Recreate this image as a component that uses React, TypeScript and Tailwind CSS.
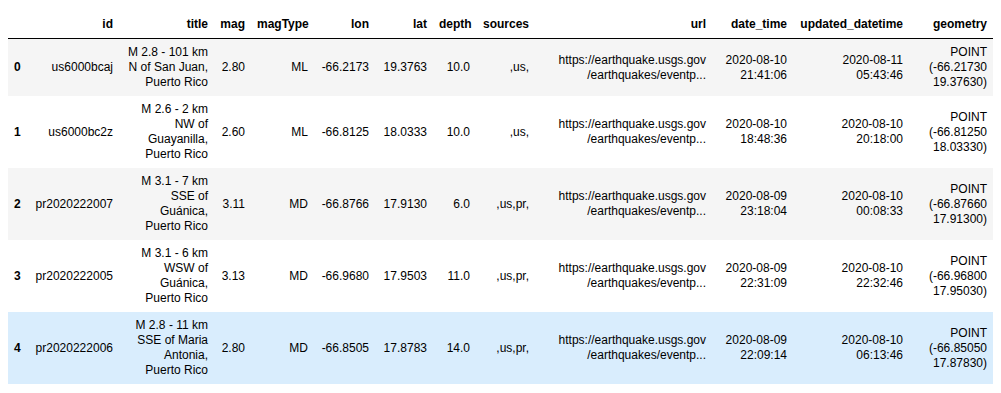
import React from 'react'

interface Quake {
  id: string;
  title: string[];
  mag: string;
  magType: string;
  lon: string;
  lat: string;
  depth: string;
  sources: string;
  date: string[];
  updated: string[];
  geometry: string[];
}

const quakes: Quake[] = [
  {
    id: 'us6000bcaj',
    title: ['M 2.8 - 101 km', 'N of San Juan,', 'Puerto Rico'],
    mag: '2.80', magType: 'ML', lon: '-66.2173', lat: '19.3763', depth: '10.0', sources: ',us,',
    date: ['2020-08-10', '21:41:06'], updated: ['2020-08-11', '05:43:46'],
    geometry: ['POINT', '(-66.21730', '19.37630)'],
  },
  {
    id: 'us6000bc2z',
    title: ['M 2.6 - 2 km', 'NW of', 'Guayanilla,', 'Puerto Rico'],
    mag: '2.60', magType: 'ML', lon: '-66.8125', lat: '18.0333', depth: '10.0', sources: ',us,',
    date: ['2020-08-10', '18:48:36'], updated: ['2020-08-10', '20:18:00'],
    geometry: ['POINT', '(-66.81250', '18.03330)'],
  },
  {
    id: 'pr2020222007',
    title: ['M 3.1 - 7 km', 'SSE of', 'Guánica,', 'Puerto Rico'],
    mag: '3.11', magType: 'MD', lon: '-66.8766', lat: '17.9130', depth: '6.0', sources: ',us,pr,',
    date: ['2020-08-09', '23:18:04'], updated: ['2020-08-10', '00:08:33'],
    geometry: ['POINT', '(-66.87660', '17.91300)'],
  },
  {
    id: 'pr2020222005',
    title: ['M 3.1 - 6 km', 'WSW of', 'Guánica,', 'Puerto Rico'],
    mag: '3.13', magType: 'MD', lon: '-66.9680', lat: '17.9503', depth: '11.0', sources: ',us,pr,',
    date: ['2020-08-09', '22:31:09'], updated: ['2020-08-10', '22:32:46'],
    geometry: ['POINT', '(-66.96800', '17.95030)'],
  },
  {
    id: 'pr2020222006',
    title: ['M 2.8 - 11 km', 'SSE of Maria', 'Antonia,', 'Puerto Rico'],
    mag: '2.80', magType: 'MD', lon: '-66.8505', lat: '17.8783', depth: '14.0', sources: ',us,pr,',
    date: ['2020-08-09', '22:09:14'], updated: ['2020-08-10', '06:13:46'],
    geometry: ['POINT', '(-66.85050', '17.87830)'],
  },
]

const url = ['https://earthquake.usgs.gov', '/earthquakes/eventp...']

const headers = ['', 'id', 'title', 'mag', 'magType', 'lon', 'lat', 'depth', 'sources', 'url', 'date_time', 'updated_datetime', 'geometry']

function Lines({ lines }: { lines: string[] }) {
  return (
    <>
      {lines.map((l, i) => (
        <div key={i}>{l}</div>
      ))}
    </>
  )
}

export default function App() {
  const rowBg = (i: number) => (i === 4 ? 'bg-[#d9edfd]' : i % 2 === 0 ? 'bg-[#f5f5f5]' : 'bg-white')

  return (
    <main className="bg-white min-h-screen pl-[8px] pt-[11px] text-black text-[12px] leading-[15px] font-['Liberation_Sans',Arial,sans-serif]">
      <table className="table-fixed border-collapse w-[985px]">
        <colgroup>
          <col className="w-[18px]" />
          <col className="w-[93px]" />
          <col className="w-[95px]" />
          <col className="w-[37px]" />
          <col className="w-[63px]" />
          <col className="w-[61px]" />
          <col className="w-[58px]" />
          <col className="w-[43px]" />
          <col className="w-[59px]" />
          <col className="w-[177px]" />
          <col className="w-[81px]" />
          <col className="w-[116px]" />
          <col className="w-[84px]" />
        </colgroup>
        <thead>
          <tr className="border-b border-black">
            {headers.map((h, i) => (
              <th key={i} className="px-[6px] py-[6px] text-right font-bold align-bottom whitespace-nowrap">
                {h}
              </th>
            ))}
          </tr>
        </thead>
        <tbody>
          {quakes.map((q, i) => (
            <tr key={q.id} className={rowBg(i)}>
              <th className="px-[6px] py-[6px] text-right font-bold align-middle">{i}</th>
              <td className="px-[6px] py-[6px] text-right align-middle whitespace-nowrap">{q.id}</td>
              <td className="px-[6px] py-[6px] text-right align-middle whitespace-nowrap"><Lines lines={q.title} /></td>
              <td className="px-[6px] py-[6px] text-right align-middle">{q.mag}</td>
              <td className="px-[6px] py-[6px] text-right align-middle">{q.magType}</td>
              <td className="px-[6px] py-[6px] text-right align-middle">{q.lon}</td>
              <td className="px-[6px] py-[6px] text-right align-middle">{q.lat}</td>
              <td className="px-[6px] py-[6px] text-right align-middle">{q.depth}</td>
              <td className="px-[6px] py-[6px] text-right align-middle whitespace-nowrap">{q.sources}</td>
              <td className="px-[6px] py-[6px] text-right align-middle whitespace-nowrap"><Lines lines={url} /></td>
              <td className="px-[6px] py-[6px] text-right align-middle whitespace-nowrap"><Lines lines={q.date} /></td>
              <td className="px-[6px] py-[6px] text-right align-middle whitespace-nowrap"><Lines lines={q.updated} /></td>
              <td className="px-[6px] py-[6px] text-right align-middle whitespace-nowrap"><Lines lines={q.geometry} /></td>
            </tr>
          ))}
        </tbody>
      </table>
    </main>
  )
}
